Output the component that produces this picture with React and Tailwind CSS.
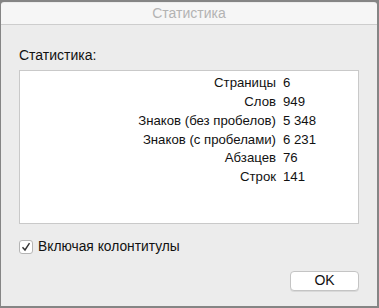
const rows = [
  ["Страницы", "6"],
  ["Слов", "949"],
  ["Знаков (без пробелов)", "5 348"],
  ["Знаков (с пробелами)", "6 231"],
  ["Абзацев", "76"],
  ["Строк", "141"],
];

export default function App() {
  return (
    <div
      className="w-[379px] h-[308px] bg-[#858585] pt-[2px] pl-px pr-[2px] pb-[2px] text-[14px] text-[#111]"
      style={{ fontFamily: '"Liberation Sans", Arial, sans-serif' }}
    >
      <div className="h-full flex flex-col bg-[#ececec] rounded-t-[3px]">
        <div className="h-[22px] flex items-center justify-center bg-[#f6f6f6] border-b border-[#cdcdcd] text-[#b3b3b3] rounded-t-[3px] mt-px">
          Статистика
        </div>
        <div className="flex flex-col px-[18px] pt-[22px]">
          <div className="leading-[16px]">Статистика:</div>
          <div className="mt-[7px] h-[154px] bg-white border border-[#c9c9c9] pt-[3px] text-[13.2px]">
            {rows.map(([label, value]) => (
              <div key={label} className="flex h-[18.7px] items-center">
                <div className="w-[256px] text-right">{label}</div>
                <div className="pl-[7px]">{value}</div>
              </div>
            ))}
          </div>
          <div className="mt-[13px] flex items-center gap-[5px]">
            <div className="w-[14px] h-[14px] bg-white border border-[#b5b5b5] rounded-[3px] flex items-center justify-center">
              <svg width="10" height="10" viewBox="0 0 10 10">
                <path d="M1.5 5.2 L4 8 L8.5 1.2" fill="none" stroke="#333" strokeWidth="1.4" />
              </svg>
            </div>
            <span className="text-[13.8px]">Включая колонтитулы</span>
          </div>
          <div className="mt-[13px] flex justify-end">
            <div className="w-[69px] h-[20px] bg-white border border-[#c4c4c4] rounded-[4px] flex items-center justify-center shadow-[0_1px_0_rgba(0,0,0,0.08)]">
              OK
            </div>
          </div>
        </div>
      </div>
    </div>
  );
}
